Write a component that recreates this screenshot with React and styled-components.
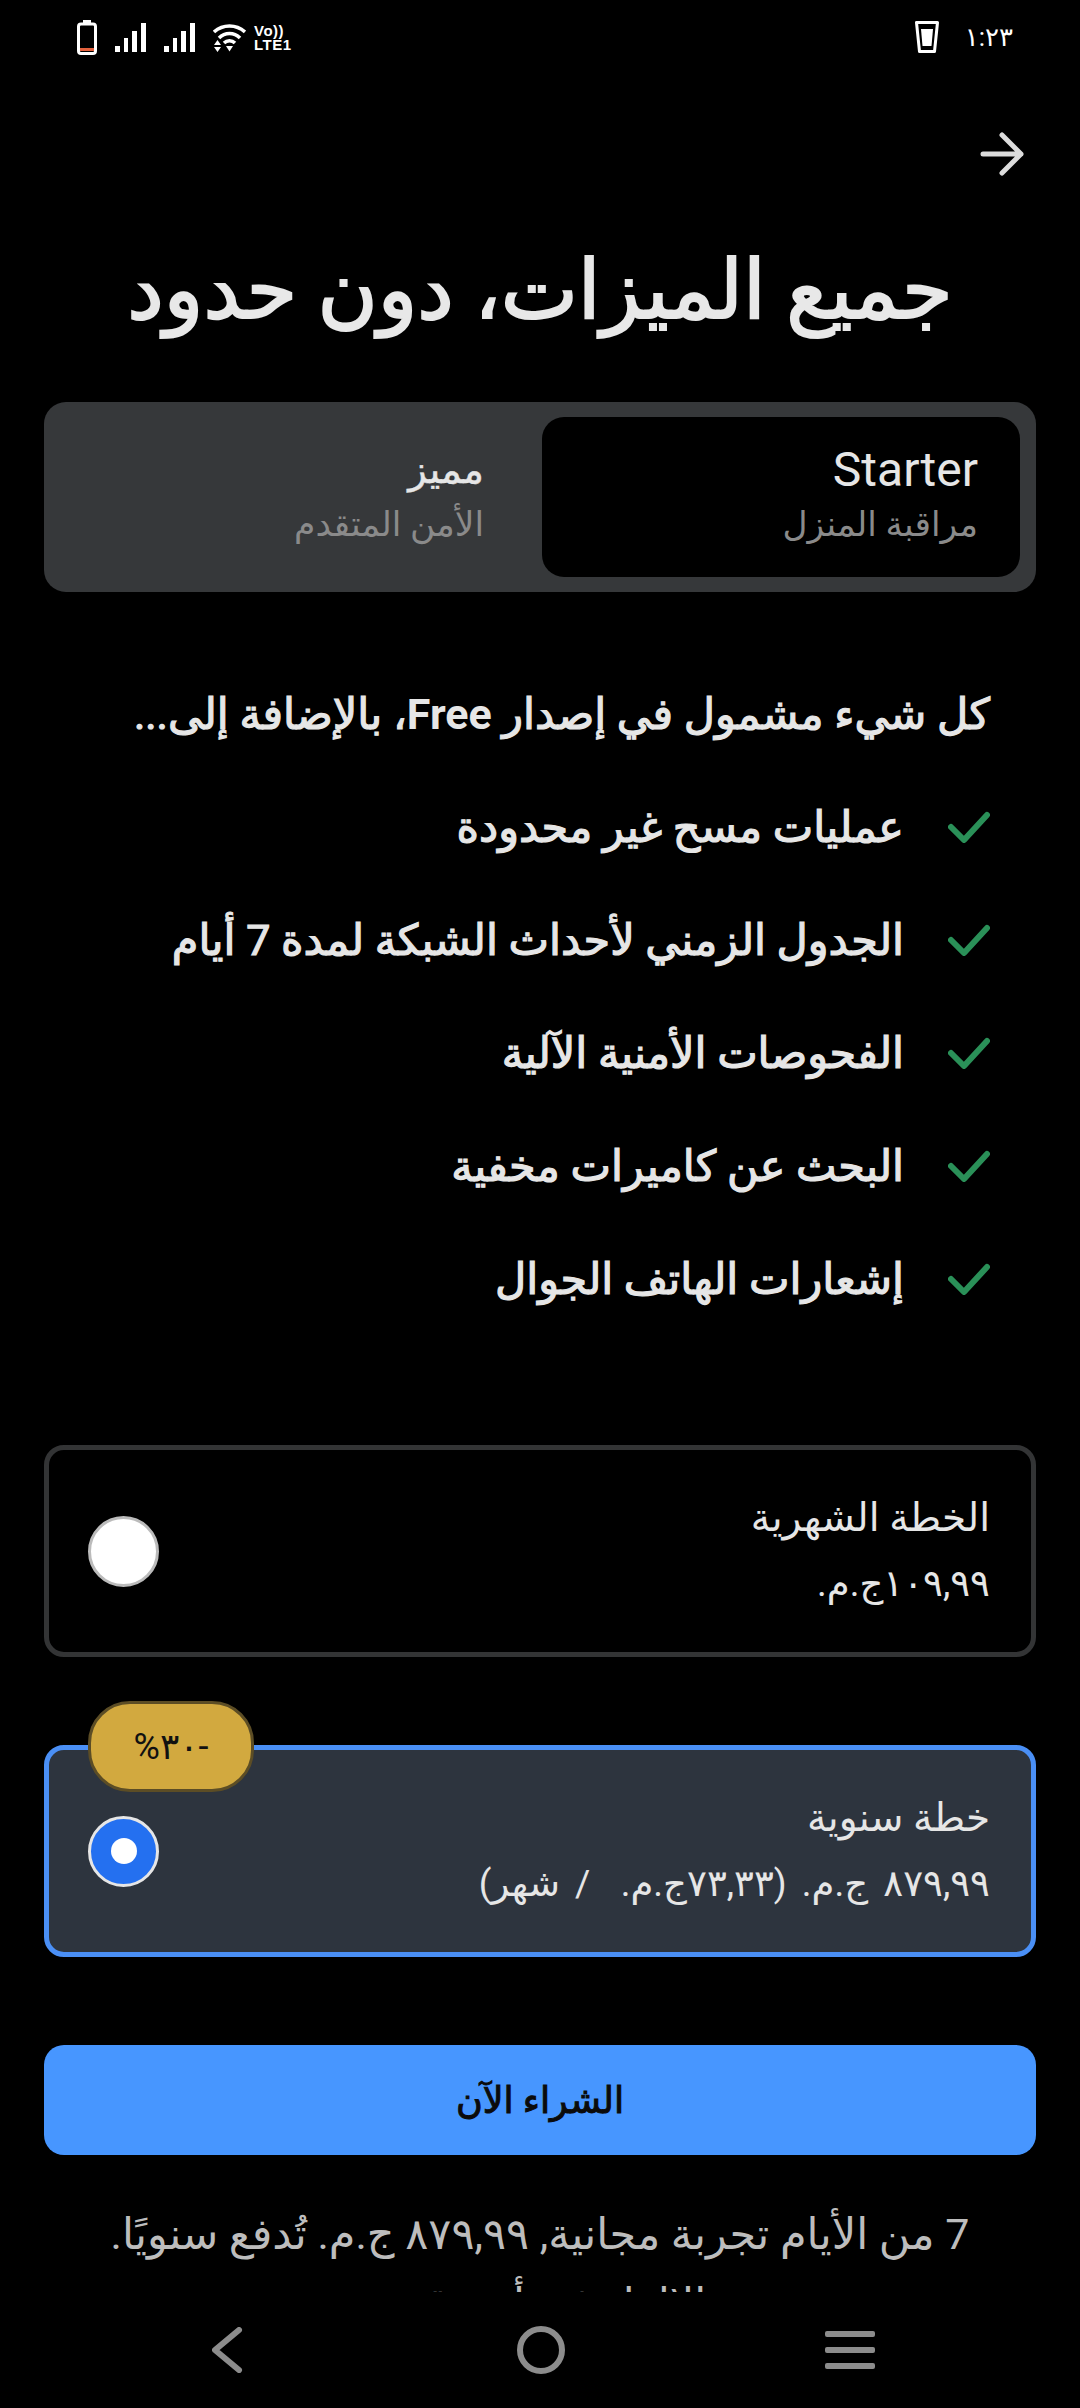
import React from 'react'
import styled, { createGlobalStyle } from 'styled-components'

const GlobalStyle = createGlobalStyle`
  html, body { margin: 0; padding: 0; background: #000; }
  * { box-sizing: border-box; }
`

const Screen = styled.div`
  width: 1080px;
  height: 2408px;
  background: #000;
  display: flex;
  flex-direction: column;
  overflow: hidden;
  font-family: Roboto, "Noto Sans", "DejaVu Sans", sans-serif;
  color: #e6e6e6;
`

const StatusBar = styled.div`
  height: 72px;
  flex: none;
  display: flex;
  justify-content: space-between;
  align-items: flex-start;
  padding: 20px 67px 0 77px;
`

const StatusGroup = styled.div`
  display: flex;
  align-items: center;
  gap: ${p => p.$gap}px;
`

const VoLte = styled.div`
  margin-left: -10px;
  font-family: "Liberation Sans", sans-serif;
  font-weight: 700;
  font-size: 15px;
  line-height: 14px;
  color: #fff;
  letter-spacing: 0.5px;
`

const Clock = styled.span`
  font-size: 26px;
  color: #fff;
  line-height: 34px;
`

const Content = styled.main`
  flex: 1;
  min-height: 0;
  overflow: hidden;
  padding: 0 44px;
`

const BackRow = styled.div`
  height: 60px;
  margin-top: 52px;
  padding-inline-start: 12px;
  display: flex;
  align-items: center;
`

const Title = styled.h1`
  margin: 56px 0 0;
  height: 100px;
  line-height: 100px;
  font-size: 82px;
  font-weight: 400;
  -webkit-text-stroke: 2px #e8e8e8;
  text-align: center;
  white-space: nowrap;
  color: #e8e8e8;
`

const Tabs = styled.div`
  margin-top: 62px;
  height: 190px;
  background: #36383a;
  border-radius: 22px;
  padding: 15px 16px;
  display: grid;
  grid-template-columns: 478px 1fr;
  gap: 16px;
`

const Tab = styled.div`
  border-radius: 22px;
  background: ${p => (p.$active ? '#000' : 'transparent')};
  padding: 24px 42px 0;
  display: flex;
  flex-direction: column;
`

const TabName = styled.div`
  font-size: ${p => (p.$arabic ? 38.5 : 48)}px;
  -webkit-text-stroke: ${p => (p.$arabic ? '0.5px' : '0')} #e6e6e6;
  line-height: 58px;
  color: #e6e6e6;
`

const TabSub = styled.div`
  font-size: 34.5px;
  line-height: 50px;
  color: #8a8a8a;
`

const Heading = styled.h2`
  margin: 92px 0 0;
  padding-inline-start: 46px;
  height: 60px;
  line-height: 60px;
  font-size: 43px;
  font-weight: 400;
  -webkit-text-stroke: 1.2px #e6e6e6;
  white-space: nowrap;
  color: #e6e6e6;
`

const Latin = styled.span`
  font-weight: 700;
  -webkit-text-stroke: 0;
`

const Features = styled.ul`
  list-style: none;
  margin: 26px 0 0;
  padding: 0 46px 0 0;
`

const Feature = styled.li`
  height: 113px;
  display: flex;
  align-items: center;
  gap: 44px;
  font-size: 43px;
  -webkit-text-stroke: 1.2px #e6e6e6;
  color: #e6e6e6;
`

const Plan = styled.div`
  position: relative;
  height: 212px;
  margin-top: ${p => p.$top}px;
  border: 5px solid ${p => (p.$active ? '#4a8ff5' : '#333435')};
  border-radius: 20px;
  background: ${p => (p.$active ? '#2d343e' : '#000')};
  padding: 0 41px 0 39px;
  display: flex;
  align-items: center;
  justify-content: space-between;
`

const PlanText = styled.div`
  color: #e6e6e6;
`

const PlanName = styled.div`
  font-size: 39px;
  line-height: 66px;
`

const PlanPrice = styled.div`
  font-size: 37px;
  line-height: 66px;
  white-space: pre;
  word-spacing: 6px;
`

const Radio = styled.div`
  width: 71px;
  height: 71px;
  border-radius: 50%;
  flex: none;
  border: 3px solid ${p => (p.$active ? '#e6e6e6' : '#bbb')};
  background: ${p => (p.$active ? '#2470f0' : '#fff')};
  display: flex;
  align-items: center;
  justify-content: center;
  &::after {
    content: '';
    display: ${p => (p.$active ? 'block' : 'none')};
    width: 26px;
    height: 26px;
    border-radius: 50%;
    background: #fff;
  }
`

const Badge = styled.div`
  position: absolute;
  top: -49px;
  left: 39px;
  width: 166px;
  height: 91px;
  border-radius: 42px;
  border: 3px solid #5c4d25;
  background: #d2a93f;
  color: #111;
  font-size: 36px;
  display: flex;
  align-items: center;
  justify-content: center;
`

const BuyButton = styled.button`
  display: block;
  width: 100%;
  height: 110px;
  margin-top: 88px;
  border: none;
  border-radius: 20px;
  background: #4796ff;
  color: #0b0b0b;
  font-family: inherit;
  font-size: 36.5px;
  -webkit-text-stroke: 1px #0b0b0b;
`

const Note = styled.p`
  margin: 44px 0 0;
  padding: 0 20px;
  font-size: 43px;
  line-height: 70px;
  text-align: center;
  color: #bdbdbd;
`

const NavBar = styled.nav`
  height: 116px;
  flex: none;
  display: flex;
  justify-content: space-between;
  align-items: center;
  padding: 0 205px 0 212px;
`

const Arrow = () => (
  <svg width="44" height="44" viewBox="0 0 44 44" fill="none" stroke="#dcdcdc" strokeWidth="5" strokeLinecap="round" strokeLinejoin="round">
    <path d="M3 22h38M22 3l19 19-19 19" />
  </svg>
)

const Check = () => (
  <svg width="42" height="32" viewBox="0 0 42 32" fill="none" stroke="#2a9058" strokeWidth="6" strokeLinecap="round" strokeLinejoin="round" style={{ flex: 'none' }}>
    <path d="M3 16l13 13L39 4" />
  </svg>
)

const Battery = () => (
  <svg width="20" height="35" viewBox="0 0 20 35" fill="none">
    <rect x="6" y="0" width="8" height="4" fill="#fff" />
    <rect x="1.5" y="4" width="17" height="29.5" rx="2.5" stroke="#fff" strokeWidth="3" />
    <rect x="3" y="28" width="14" height="3" fill="#e2603c" />
  </svg>
)

const Signal = () => (
  <svg width="31" height="29" viewBox="0 0 31 29" fill="#fff">
    <rect x="0" y="23" width="5" height="6" />
    <rect x="9" y="15" width="4" height="14" />
    <rect x="17" y="8" width="5" height="21" />
    <rect x="26" y="0" width="5" height="29" />
  </svg>
)

const Wifi = () => (
  <svg width="33" height="28" viewBox="0 0 33 28" fill="none" stroke="#fff" strokeWidth="3.5">
    <path d="M1 8C10 0 23 0 32 8" />
    <path d="M6 14C12 8 21 8 27 14" />
    <path d="M11 19c3-3 8-3 11 0" />
    <path d="M13 22h7l-3.5 5.5z" fill="#fff" stroke="none" />
    <path d="M1 21l3.5-5 3.5 5zM1 23h7l-3.5 5z" fill="#fff" stroke="none" />
  </svg>
)

const Cup = () => (
  <svg width="24" height="32" viewBox="0 0 24 32" fill="none">
    <path d="M1.5 1.5h21l-3 29h-15z" stroke="#fff" strokeWidth="3" strokeLinejoin="round" />
    <path d="M6 8h12l-1.5 17h-9z" fill="#fff" />
  </svg>
)

const NavBack = () => (
  <svg width="44" height="46" viewBox="0 0 44 46" fill="none" stroke="#8c8c8c" strokeWidth="6" strokeLinecap="round" strokeLinejoin="round">
    <path d="M27 3L3 23l24 20" />
  </svg>
)

const NavHome = () => (
  <svg width="48" height="48" viewBox="0 0 48 48" fill="none" stroke="#8c8c8c" strokeWidth="6">
    <circle cx="24" cy="24" r="21" />
  </svg>
)

const NavMenu = () => (
  <svg width="50" height="38" viewBox="0 0 50 38" fill="#8c8c8c">
    <rect y="0" width="50" height="6" rx="2" />
    <rect y="16" width="50" height="6" rx="2" />
    <rect y="32" width="50" height="6" rx="2" />
  </svg>
)

const features = [
  'عمليات مسح غير محدودة',
  'الجدول الزمني لأحداث الشبكة لمدة 7 أيام',
  'الفحوصات الأمنية الآلية',
  'البحث عن كاميرات مخفية',
  'إشعارات الهاتف الجوال',
]

export default function App() {
  return (
    <Screen>
      <GlobalStyle />
      <StatusBar>
        <StatusGroup $gap={18}>
          <Battery />
          <Signal />
          <Signal />
          <Wifi />
          <VoLte>Vo))<br />LTE1</VoLte>
        </StatusGroup>
        <StatusGroup $gap={26}>
          <Cup />
          <Clock>١:٢٣</Clock>
        </StatusGroup>
      </StatusBar>
      <Content dir="rtl">
        <BackRow><Arrow /></BackRow>
        <Title>جميع الميزات، دون حدود</Title>
        <Tabs>
          <Tab $active>
            <TabName>Starter</TabName>
            <TabSub>مراقبة المنزل</TabSub>
          </Tab>
          <Tab>
            <TabName $arabic>مميز</TabName>
            <TabSub>الأمن المتقدم</TabSub>
          </Tab>
        </Tabs>
        <Heading>كل شيء مشمول في إصدار <Latin>Free</Latin>، بالإضافة إلى...</Heading>
        <Features>
          {features.map(f => (
            <Feature key={f}><Check />{f}</Feature>
          ))}
        </Features>
        <Plan $top={110}>
          <PlanText>
            <PlanName>الخطة الشهرية</PlanName>
            <PlanPrice>١٠٩,٩٩ج.م.</PlanPrice>
          </PlanText>
          <Radio />
        </Plan>
        <Plan $top={88} $active>
          <PlanText>
            <PlanName>خطة سنوية</PlanName>
            <PlanPrice>٨٧٩,٩٩ ج.م. (٧٣,٣٣ج.م.  / شهر)</PlanPrice>
          </PlanText>
          <Radio $active />
          <Badge>-٣٠%</Badge>
        </Plan>
        <BuyButton>الشراء الآن</BuyButton>
        <Note>7 من الأيام تجربة مجانية, ٨٧٩,٩٩ ج.م. تُدفع سنويًا. الإلغاء في أي وقت.</Note>
      </Content>
      <NavBar>
        <NavBack />
        <NavHome />
        <NavMenu />
      </NavBar>
    </Screen>
  )
}
